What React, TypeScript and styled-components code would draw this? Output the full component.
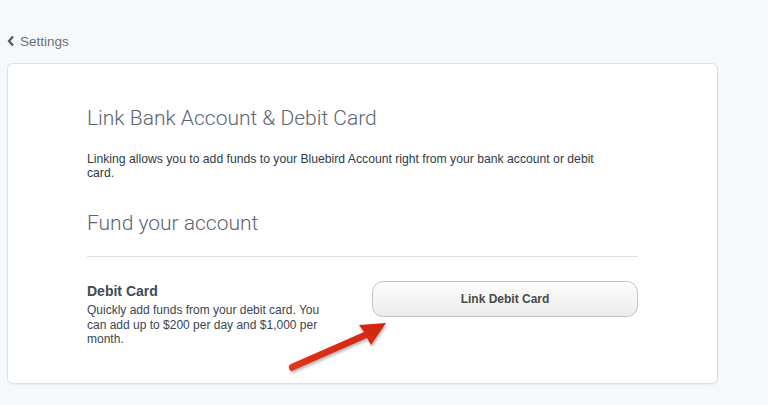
import React from "react";
import styled, { createGlobalStyle } from "styled-components";

const Global = createGlobalStyle`
  html, body { margin: 0; padding: 0; background: #f5f9fc; }
  body { font-family: "Liberation Sans", Arial, sans-serif; }
`;

const Page = styled.div`
  width: 768px;
  height: 405px;
  padding: 30px 50px 0 7px;
  box-sizing: border-box;
  background: #f5f9fc;
  position: relative;
  overflow: hidden;
`;

const Back = styled.div`
  display: flex;
  align-items: center;
  gap: 5px;
  height: 22px;
  color: #6b6f73;
  font-size: 13.5px;
  margin-bottom: 11px;
`;

const Card = styled.div`
  width: 711px;
  height: 321px;
  box-sizing: border-box;
  background: #fff;
  border: 1px solid #dde1e4;
  border-radius: 6px;
  box-shadow: 0 1px 2px rgba(0, 0, 0, 0.06);
  padding: 40px 80px 0 79px;
`;

const Title = styled.h1`
  margin: 0;
  font-family: Roboto, "Liberation Sans", sans-serif;
  font-weight: 300;
  font-size: 21px;
  color: #5b6570;
  line-height: 28px;
`;

const Intro = styled.p`
  margin: 20px 0 0;
  width: 520px;
  font-size: 12.2px;
  line-height: 14px;
  color: #2f3b48;
`;

const Section = styled.h2`
  margin: 29px 0 0;
  font-family: Roboto, "Liberation Sans", sans-serif;
  font-weight: 300;
  font-size: 21px;
  color: #5b6570;
  line-height: 28px;
`;

const Divider = styled.hr`
  margin: 19px 0 0;
  border: 0;
  border-top: 1px solid #dcdfe2;
  width: 551px;
`;

const Row = styled.div`
  display: flex;
  justify-content: space-between;
  align-items: flex-start;
  width: 551px;
  margin-top: 26px;
`;

const Info = styled.div`
  width: 242px;
`;

const Label = styled.div`
  font-weight: bold;
  font-size: 14px;
  color: #3e4a57;
  line-height: 16px;
`;

const Desc = styled.div`
  margin-top: 4px;
  font-size: 12px;
  line-height: 14.5px;
  color: #3a4653;
`;

const Button = styled.button`
  margin-top: -2px;
  width: 266px;
  height: 36px;
  border: 1px solid #c4c6c8;
  border-radius: 11px;
  background: linear-gradient(#fdfdfd, #ececec);
  font-family: "Liberation Sans", Arial, sans-serif;
  font-weight: bold;
  font-size: 12px;
  color: #4a4a4a;
`;

const Arrow = styled.svg`
  position: absolute;
  left: 282px;
  top: 316px;
`;

export default function App() {
  return (
    <Page>
      <Global />
      <Back>
        <svg width="8" height="12" viewBox="0 0 8 12">
          <path d="M6 1.5 L2 6 L6 10.5" fill="none" stroke="#555" strokeWidth="2.2" />
        </svg>
        Settings
      </Back>
      <Card>
        <Title>Link Bank Account &amp; Debit Card</Title>
        <Intro>
          Linking allows you to add funds to your Bluebird Account right from your bank account or debit card.
        </Intro>
        <Section>Fund your account</Section>
        <Divider />
        <Row>
          <Info>
            <Label>Debit Card</Label>
            <Desc>
              Quickly add funds from your debit card. You can add up to $200 per day and $1,000 per month.
            </Desc>
          </Info>
          <Button>Link Debit Card</Button>
        </Row>
      </Card>
      <Arrow width="112" height="62" viewBox="0 0 112 62">
        <defs>
          <linearGradient id="ag" x1="0" y1="1" x2="1" y2="0">
            <stop offset="0" stopColor="#e0321c" />
            <stop offset="1" stopColor="#d0260f" />
          </linearGradient>
          <filter id="sh" x="-20%" y="-20%" width="140%" height="140%">
            <feDropShadow dx="1" dy="2" stdDeviation="1.5" floodColor="#000" floodOpacity="0.3" />
          </filter>
        </defs>
        <path
          d="M8 54 Q5 50 9 48 L82 16 L77 9 L104 7 L89 29 L85 22 L12 54 Q9 56 8 54 Z"
          fill="url(#ag)"
          filter="url(#sh)"
        />
      </Arrow>
    </Page>
  );
}
